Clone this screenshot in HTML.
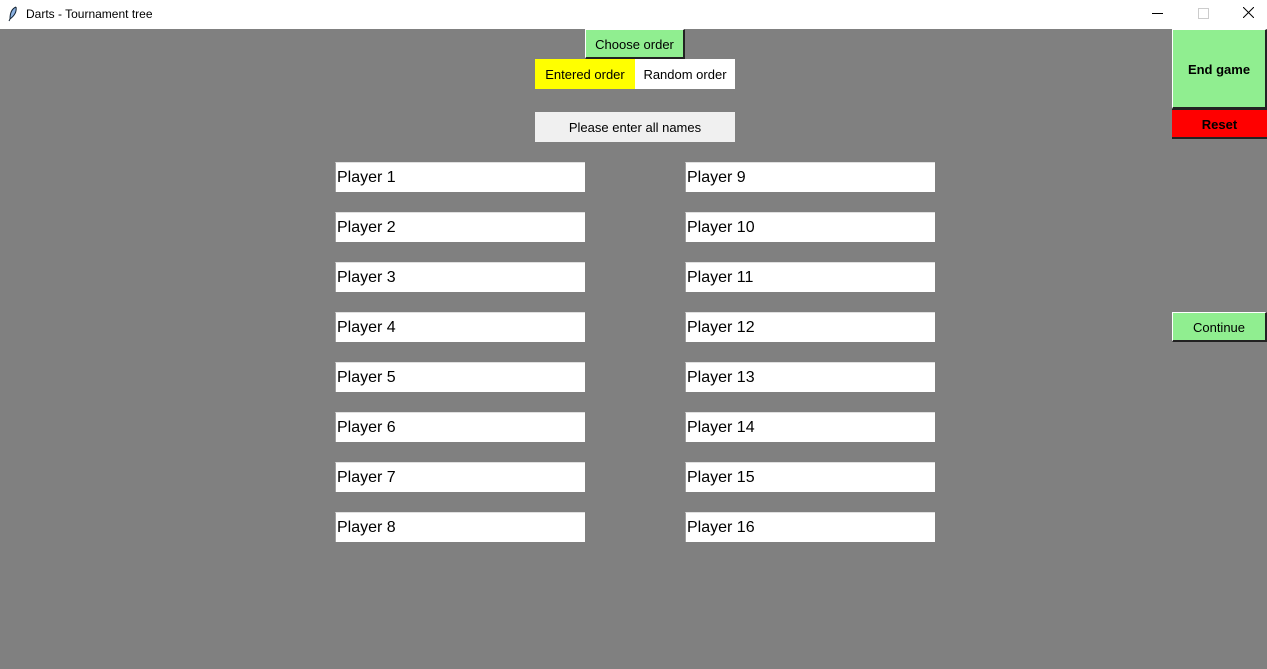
<!DOCTYPE html><html><head><style>
body{margin:0;width:1267px;height:669px;background:#808080;position:relative;overflow:hidden;font-family:"Liberation Sans",Arial,sans-serif}
.a{position:absolute;box-sizing:border-box;display:flex;align-items:center;justify-content:center;font-size:13px;color:#000}
.e{position:absolute;box-sizing:border-box;width:250px;height:30px;background:#fff;border-left:1px solid #a0a0a0;border-top:1px solid #e0e0e0;font-size:16px;padding-left:1px;line-height:30px}
.g{background:#90ee90;border-right:2px solid #222;border-bottom:2px solid #222;border-left:1px solid #fff;border-top:1px solid #fff}
</style></head><body>
<div class="a" style="left:0;top:0;width:1267px;height:29px;background:#fff;justify-content:flex-start">
<svg style="position:absolute;left:8px;top:6px" width="10" height="16" viewBox="0 0 10 16"><path d="M8 1 C3 3 2 9 2 13 L1 15 M2 13 C6 10 9 6 8 1" stroke="#123" fill="#8ab0e0" stroke-width="1"/></svg>
<span style="position:absolute;left:26px;top:7px;font-size:12px">Darts - Tournament tree</span>
<span style="position:absolute;left:1152px;top:13px;width:11px;height:1px;background:#000"></span>
<span style="position:absolute;left:1198px;top:8px;width:9px;height:9px;border:1px solid #ccc"></span>
<svg style="position:absolute;left:1243px;top:7px" width="11" height="11"><path d="M0 0L11 11M11 0L0 11" stroke="#000"/></svg>
</div>
<div class="a g" style="left:585px;top:29px;width:100px;height:30px;padding-top:1px">Choose order</div>
<div class="a" style="left:535px;top:59px;width:100px;height:30px;background:#ff0">Entered order</div>
<div class="a" style="left:635px;top:59px;width:100px;height:30px;background:#fff">Random order</div>
<div class="a" style="left:535px;top:112px;width:200px;height:30px;background:#f0f0f0">Please enter all names</div>
<div class="a g" style="left:1172px;top:29px;width:95px;height:80px;font-weight:bold;padding-top:2px">End game</div>
<div class="a" style="left:1172px;top:109px;width:95px;height:30px;background:#f00;font-weight:bold;border-bottom:2px solid #222;border-top:1px solid #222;padding-top:1px">Reset</div>
<div class="a g" style="left:1172px;top:312px;width:95px;height:30px;padding-top:1px">Continue</div>
<div class="e" style="left:335px;top:162px">Player 1</div>
<div class="e" style="left:335px;top:212px">Player 2</div>
<div class="e" style="left:335px;top:262px">Player 3</div>
<div class="e" style="left:335px;top:312px">Player 4</div>
<div class="e" style="left:335px;top:362px">Player 5</div>
<div class="e" style="left:335px;top:412px">Player 6</div>
<div class="e" style="left:335px;top:462px">Player 7</div>
<div class="e" style="left:335px;top:512px">Player 8</div>
<div class="e" style="left:685px;top:162px">Player 9</div>
<div class="e" style="left:685px;top:212px">Player 10</div>
<div class="e" style="left:685px;top:262px">Player 11</div>
<div class="e" style="left:685px;top:312px">Player 12</div>
<div class="e" style="left:685px;top:362px">Player 13</div>
<div class="e" style="left:685px;top:412px">Player 14</div>
<div class="e" style="left:685px;top:462px">Player 15</div>
<div class="e" style="left:685px;top:512px">Player 16</div>
</body></html>
